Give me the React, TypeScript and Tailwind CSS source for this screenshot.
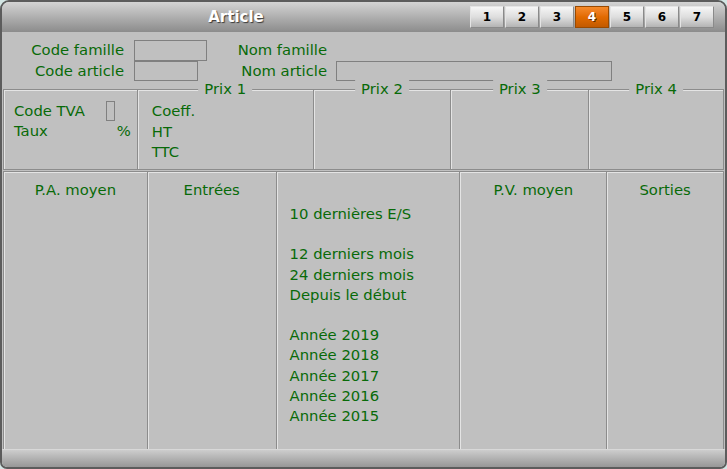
import React from "react";

const tabs = [1, 2, 3, 4, 5, 6, 7];

const prix = [
  { title: "", w: "w-[134px]" },
  { title: "Prix 1", w: "w-[176px]" },
  { title: "Prix 2", w: "w-[138px]" },
  { title: "Prix 3", w: "w-[138px]" },
  { title: "Prix 4", w: "w-[135px]" },
];

const periods = [
  "10 dernières E/S",
  "",
  "12 derniers mois",
  "24 derniers mois",
  "Depuis le début",
  "",
  "Année 2019",
  "Année 2018",
  "Année 2017",
  "Année 2016",
  "Année 2015",
];

function Tab({ n, active }: { n: number; active?: boolean }) {
  return (
    <div
      className={`flex h-[22px] w-[34px] items-center justify-center border text-[12px] font-bold ${
        active
          ? "border-[#9a4a00] bg-linear-to-b from-[#f58a2a] via-[#e26a00] to-[#c25a00] text-white [text-shadow:1px_1px_0_#5a2a00]"
          : "border-[#8a8a8a] border-t-[#e4e4e4] border-l-[#e4e4e4] bg-linear-to-b from-[#f6f6f6] via-[#dedede] to-[#b4b4b4] text-black"
      }`}
    >
      {n}
    </div>
  );
}

function Box({ className }: { className: string }) {
  return <div className={`border border-[#808080] ${className}`} />;
}

export default function App() {
  return (
    <div className="h-[469px] w-[727px] bg-[#d3e6e4] font-['DejaVu_Sans',Verdana,sans-serif]">
      <div className="flex h-full flex-col overflow-hidden rounded-t-[9px] rounded-b-[7px] border-2 border-[#5c5c5c]">
        {/* Title bar */}
        <div className="flex h-[30px] shrink-0 items-center bg-linear-to-b from-[#d4d4d4] to-[#8c8c8c]">
          <div className="flex-1 text-center text-[15px] font-bold text-white [text-shadow:1px_1px_1px_#3a3a3a]">
            Article
          </div>
          <div className="mr-[11px] flex gap-px">
            {tabs.map((n) => (
              <Tab key={n} n={n} active={n === 4} />
            ))}
          </div>
        </div>

        {/* Body */}
        <div className="flex flex-1 flex-col bg-[#c0c0c0] px-px text-[14.8px] text-[#086a08]">
          <div className="pt-[8px]">
            <div className="flex h-[21px] items-center">
              <span className="w-[121px] text-right">Code famille</span>
              <Box className="ml-[10px] h-[21px] w-[73px]" />
              <span className="w-[120px] text-right">Nom famille</span>
            </div>
            <div className="flex h-[20px] items-center">
              <span className="w-[121px] text-right">Code article</span>
              <Box className="ml-[10px] h-[20px] w-[64px]" />
              <span className="w-[129px] text-right">Nom article</span>
              <Box className="ml-[9px] h-[20px] w-[276px]" />
            </div>
          </div>

          {/* Prix row */}
          <div className="mt-[8px] flex h-[81px] border-l border-[#8c8c8c]">
            {prix.map((p, i) => (
              <div
                key={i}
                className={`relative ${p.w} border-y border-r border-[#8c8c8c] shadow-[inset_1px_1px_0_#e4e4e4]`}
              >
                {p.title && (
                  <span className="absolute -top-[10px] left-1/2 -translate-x-1/2 bg-[#c0c0c0] px-[6px] leading-[18px]">
                    {p.title}
                  </span>
                )}
                {i === 0 && (
                  <div className="pt-[11px] pr-[6px] pl-[10px] leading-[20px]">
                    <div className="flex items-center">
                      <span className="w-[92px]">Code TVA</span>
                      <Box className="h-[20px] w-[9px]" />
                    </div>
                    <div className="flex justify-between">
                      <span>Taux</span>
                      <span>%</span>
                    </div>
                  </div>
                )}
                {i === 1 && (
                  <div className="pt-[11px] pl-[14px] leading-[20.5px]">
                    <div>Coeff.</div>
                    <div>HT</div>
                    <div>TTC</div>
                  </div>
                )}
              </div>
            ))}
          </div>

          {/* Stock section */}
          <div className="mt-px flex flex-1 border-l border-t border-[#8c8c8c]">
            <div className="w-[144px] border-r border-[#8c8c8c] pt-[8px] text-center leading-[20px] shadow-[inset_1px_1px_0_#e4e4e4]">
              P.A. moyen
            </div>
            <div className="w-[129px] border-r border-[#8c8c8c] pt-[8px] text-center leading-[20px] shadow-[inset_1px_1px_0_#e4e4e4]">
              Entrées
            </div>
            <div className="w-[184px] border-r border-[#8c8c8c] pt-[32px] pl-[13px] leading-[20.2px] shadow-[inset_1px_1px_0_#e4e4e4]">
              {periods.map((t, i) => (
                <div key={i} className="h-[20.2px]">
                  {t}
                </div>
              ))}
            </div>
            <div className="w-[147px] border-r border-[#8c8c8c] pt-[8px] text-center leading-[20px] shadow-[inset_1px_1px_0_#e4e4e4]">
              P.V. moyen
            </div>
            <div className="w-[117px] border-r border-[#8c8c8c] pt-[8px] text-center leading-[20px] shadow-[inset_1px_1px_0_#e4e4e4]">
              Sorties
            </div>
          </div>
        </div>

        {/* Footer */}
        <div className="h-[18px] shrink-0 border-t border-[#d8d8d8] bg-linear-to-b from-[#cdcdcd] to-[#979797]" />
      </div>
    </div>
  );
}
